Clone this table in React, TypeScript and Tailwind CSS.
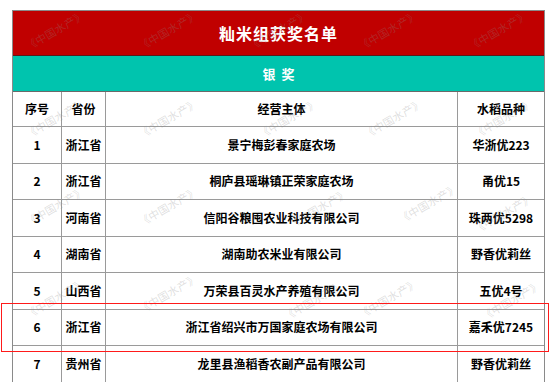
import React from "react";

const rows = [
  ["1", "浙江省", "景宁梅彭春家庭农场", "华浙优223"],
  ["2", "浙江省", "桐庐县瑶琳镇正荣家庭农场", "甬优15"],
  ["3", "河南省", "信阳谷粮囤农业科技有限公司", "珠两优5298"],
  ["4", "湖南省", "湖南助农米业有限公司", "野香优莉丝"],
  ["5", "山西省", "万荣县百灵水产养殖有限公司", "五优4号"],
  ["6", "浙江省", "浙江省绍兴市万国家庭农场有限公司", "嘉禾优7245"],
  ["7", "贵州省", "龙里县渔稻香农副产品有限公司", "野香优莉丝"],
];

const marks: [number, number][] = [
  [22, 22], [135, 22], [245, 22], [355, 22], [465, 22],
  [22, 110], [135, 110], [255, 110], [360, 110], [470, 110],
  [22, 198], [135, 198], [285, 200], [395, 195], [470, 205],
  [22, 290], [135, 285], [280, 292], [355, 290], [478, 292],
];

export default function App() {
  return (
    <div
      className="relative w-[553px] h-[382px] overflow-hidden bg-white"
      style={{ fontFamily: '"Noto Sans CJK SC", "Noto Sans", sans-serif' }}
    >
      <div className="pl-[12px] pt-[10px]">
        <div className="w-[533px] flex flex-col border-l border-r border-t border-[#8a8a8a]">
          <div className="h-[45px] bg-[#c00000] flex items-center justify-center text-white font-bold text-[16px] tracking-[1px] border-b border-[#5a1a1a]">
            籼米组获奖名单
          </div>
          <div className="h-[36px] bg-[#00c4ae] flex items-center justify-center text-white font-bold text-[13px] border-b border-[#6a6a6a]">
            银&nbsp;&nbsp;奖
          </div>
          <div className="flex h-[35px] border-b border-[#9a9a9a] text-[12px] font-bold text-black">
            <div className="w-[49px] flex items-center justify-center border-r border-[#9a9a9a]">序号</div>
            <div className="w-[44px] flex items-center justify-center border-r border-[#9a9a9a]">省份</div>
            <div className="w-[352px] flex items-center justify-center border-r border-[#9a9a9a]">经营主体</div>
            <div className="flex-1 flex items-center justify-center">水稻品种</div>
          </div>
          {rows.map((r, i) => (
            <div
              key={i}
              className={
                "flex h-[36.5px] text-[12px] font-bold text-black border-b " +
                (i === 6 ? "border-[#3c5a8c]" : "border-[#9a9a9a]")
              }
            >
              <div className="w-[49px] flex items-center justify-center border-r border-[#9a9a9a]">{r[0]}</div>
              <div className="w-[44px] flex items-center justify-center border-r border-[#9a9a9a]">{r[1]}</div>
              <div className="w-[352px] flex items-center justify-center border-r border-[#9a9a9a]">{r[2]}</div>
              <div className="flex-1 flex items-center justify-center">{r[3]}</div>
            </div>
          ))}
        </div>
      </div>

      {marks.map(([x, y], i) => (
        <div
          key={i}
          className="absolute text-[11px] text-[rgba(140,140,140,0.28)] -rotate-[30deg] whitespace-nowrap pointer-events-none"
          style={{ left: x, top: y }}
        >
          《中国水产》
        </div>
      ))}

      <div className="absolute left-[1px] top-[303px] w-[548px] h-[49px] border-[1.5px] border-[#ff1a1a] pointer-events-none" />
    </div>
  );
}
